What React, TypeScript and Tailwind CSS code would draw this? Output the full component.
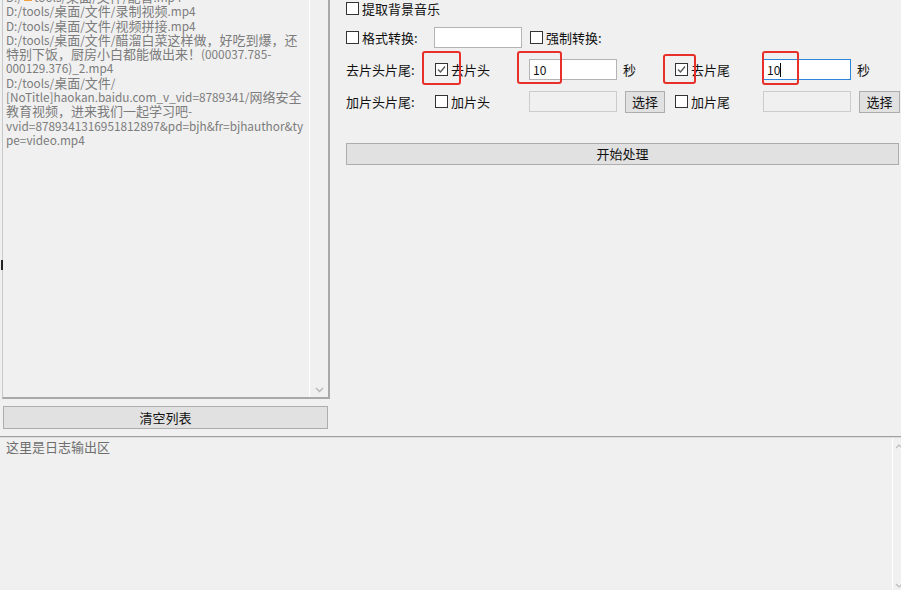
import React from 'react';

const Box: React.FC<{ checked?: boolean }> = ({ checked }) => (
  <span className="flex items-center justify-center w-[13px] h-[13px] shrink-0 border border-[#333333] bg-white">
    {checked && (
      <svg width="11" height="11" viewBox="0 0 11 11">
        <polyline points="2,5.5 4.5,8 9,2.5" fill="none" stroke="#5a5a5a" strokeWidth="1.4" />
      </svg>
    )}
  </span>
);

const Check: React.FC<{ label: string; checked?: boolean; className?: string }> = ({ label, checked, className }) => (
  <div className={`flex items-center ${className ?? ''}`}>
    <Box checked={checked} />
    <span className="ml-[3px] leading-none">{label}</span>
  </div>
);

const Btn: React.FC<{ label: string; className?: string }> = ({ label, className }) => (
  <div className={`flex items-center justify-center h-[22px] bg-[#e1e1e1] border border-[#adadad] ${className ?? ''}`}>
    {label}
  </div>
);

const Mark: React.FC<{ className: string }> = ({ className }) => (
  <div className={`absolute border-2 border-[#e8302a] rounded-[3px] ${className}`} />
);

// windows list box: latin glyphs are a touch smaller than the cjk fallback
const Mixed: React.FC<{ text: string }> = ({ text }) => (
  <>
    {text.split(/([\u3000-\u9fff\uff00-\uffef]+)/).map((part, i) =>
      i % 2 === 1 ? (
        <span key={i} className="text-[13px]">{part}</span>
      ) : (
        <span key={i}>{part}</span>
      )
    )}
  </>
);

const files = [
  'D:/tools/桌面/文件/录制视频.mp4',
  'D:/tools/桌面/文件/视频拼接.mp4',
  'D:/tools/桌面/文件/醋溜白菜这样做，好吃到爆，还',
  '特别下饭，厨房小白都能做出来！(000037.785-',
  '000129.376)_2.mp4',
  'D:/tools/桌面/文件/',
  '[NoTitle]haokan.baidu.com_v_vid=8789341/网络安全',
  '教育视频，进来我们一起学习吧-',
  'vvid=8789341316951812897&pd=bjh&fr=bjhauthor&ty',
  'pe=video.mp4',
];

export default function App() {
  return (
    <div className="relative w-[901px] h-[590px] overflow-hidden bg-[#f0f0f0] text-[13px] text-[#111] font-['Noto_Sans_CJK_SC','Noto_Sans',sans-serif] flex flex-col">
      <div className="flex h-[436px] shrink-0">
        {/* left: file list */}
        <div className="w-[330px] shrink-0 flex flex-col">
          <div className="ml-[2px] w-[328px] h-[399px] flex border-l border-l-[#c8c8c8] border-r-2 border-r-[#a9a9a9] border-b-2 border-b-[#a9a9a9]">
            <div className="flex-1 pl-[3px] text-[11.8px] leading-[14.3px] text-[#7c7c7c] overflow-hidden">
              <div className="mt-[-10px] whitespace-nowrap flex items-center">
                D:/<span className="inline-block w-[8px] h-[8px] bg-[#f0a040] mx-[2px]" />tools/<Mixed text="桌面/文件/配音.mp4" />
              </div>
              {files.map((f, i) => (
                <div key={i} className="whitespace-nowrap">
                  <Mixed text={f} />
                </div>
              ))}
            </div>
            <div className="w-[19px] shrink-0 border-l border-l-white flex flex-col justify-end items-center pb-[4px]">
              <svg width="9" height="6" viewBox="0 0 9 6">
                <polyline points="1,1 4.5,4.5 8,1" fill="none" stroke="#b5b5b5" strokeWidth="1.3" />
              </svg>
            </div>
          </div>
          <Btn label="清空列表" className="mt-[7px] ml-[3px] w-[325px] h-[23px]" />
        </div>

        {/* right: options */}
        <div className="flex-1 pl-[16px] flex flex-col">
          <div className="mt-px h-[15px] flex items-center">
            <Check label="提取背景音乐" />
          </div>

          <div className="mt-[11px] h-[21px] flex items-center">
            <Check label="格式转换:" className="w-[88px]" />
            <div className="w-[88px] h-[21px] bg-white border border-[#b4b4b4]" />
            <Check label="强制转换:" className="ml-[8px]" />
          </div>

          <div className="mt-[11px] h-[21px] flex items-center">
            <span className="w-[89px]">去片头片尾:</span>
            <Check label="去片头" checked className="w-[94px]" />
            <div className="w-[88px] h-[21px] bg-white border border-[#b4b4b4] text-[12px] pl-[3px] flex items-center">10</div>
            <span className="ml-[6px] w-[52px]">秒</span>
            <Check label="去片尾" checked className="w-[88px]" />
            <div className="w-[88px] h-[21px] bg-white border border-[#2d86d9] text-[12px] pl-[3px] flex items-center">
              10<span className="inline-block w-px h-[14px] bg-black" />
            </div>
            <span className="ml-[6px]">秒</span>
          </div>

          <div className="mt-[11px] h-[21px] flex items-center">
            <span className="w-[89px]">加片头片尾:</span>
            <Check label="加片头" className="w-[94px]" />
            <div className="w-[88px] h-[21px] bg-[#f0f0f0] border border-[#cccccc]" />
            <Btn label="选择" className="ml-[8px] w-[40px]" />
            <Check label="加片尾" className="ml-[10px] w-[88px]" />
            <div className="w-[88px] h-[21px] bg-[#f0f0f0] border border-[#cccccc]" />
            <Btn label="选择" className="ml-[8px] w-[41px]" />
          </div>

          <Btn label="开始处理" className="mt-[31px] w-[553px]" />
        </div>
      </div>

      {/* splitter */}
      <div className="h-px bg-[#a0a0a0] shrink-0" />
      <div className="h-px bg-[#dcdcdc] shrink-0" />

      {/* log area */}
      <div className="flex-1 flex">
        <div className="flex-1 pl-[6px] leading-[18px] text-[#6e6e6e]">这里是日志输出区</div>
        <div className="w-[9px] border-l border-l-white flex flex-col justify-between items-end pt-[6px] pb-[2px]">
          <svg width="6" height="5" viewBox="0 0 6 5">
            <polyline points="1,4 4,1 7,4" fill="none" stroke="#bdbdbd" strokeWidth="1.2" />
          </svg>
          <svg width="6" height="5" viewBox="0 0 6 5">
            <polyline points="1,1 4,4 7,1" fill="none" stroke="#bdbdbd" strokeWidth="1.2" />
          </svg>
        </div>
      </div>

      {/* splitter grip */}
      <div className="absolute left-[1px] top-[260px] w-[2px] h-[10px] bg-[#222]" />

      {/* annotation boxes */}
      <Mark className="left-[422px] top-[51px] w-[39px] h-[34px]" />
      <Mark className="left-[517px] top-[51px] w-[45px] h-[33px]" />
      <Mark className="left-[663px] top-[54px] w-[33px] h-[30px]" />
      <Mark className="left-[762px] top-[51px] w-[37px] h-[34px]" />
    </div>
  );
}
